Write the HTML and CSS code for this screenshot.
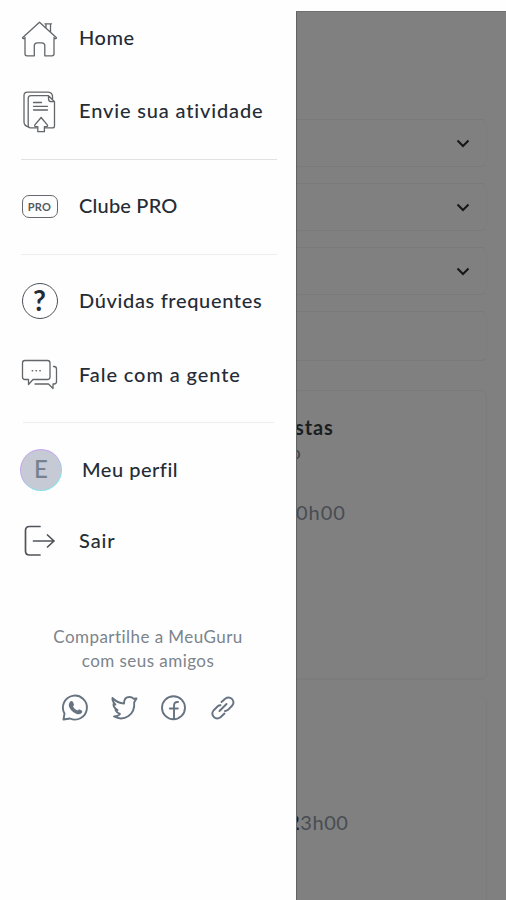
FILE: index.html
```html
<!DOCTYPE html>
<html lang="pt-BR">
<head>
<meta charset="utf-8">
<title>MeuGuru</title>
<link rel="stylesheet" href="styles.css">
</head>
<body>
<div class="app">
  <aside class="drawer">
    <nav class="menu">
      <a class="item home"><svg class="icon" viewBox="2.5 1.700 39 39"><path d="M7.500 21v16.500q0 2 2 2h7.300V29.500q0-3 3-3h4.500q3 0 3 3v10h7.200q2 0 2-2V21M5 21.500 22 6l17 15.500M5 21.500q.5 1.500 2.500.5M39 21.500q-.5 1.500-2.500.5M28.500 11.500V7.500h4.500v8.500M27.500 7.500h6.500"/></svg><span>Home</span></a>
      <a class="item send"><svg class="icon" viewBox="20 92 39 39"><path d="M37 127.800h-6.500q-2.300 0-2.300-2.300V98.500q0-2.800 2.800-2.800h17.500l6 6v24q0 2.200-2.200 2.200H44M48.500 95.700v3q0 3 3 3h3M28.200 127q-4.200-1.500-4.200-5V95.500q0-3.300 3.500-3.300h20.500q3.500 0 4.500 3.500v3M33.500 102.500h8M33.500 106.300h14M33.500 110h14"/><path class="up" d="M37.800 131.700v-5h-2.200q-1.700-.5-.5-2l6-7.200 6 7.200q1.200 1.500-.5 2h-2.200v5z"/></svg><span>Envie sua atividade</span></a>
      <hr>
      <a class="item club"><span class="icon"><span class="pro">PRO</span></span><span>Clube PRO</span></a>
      <hr class="light">
      <a class="item faq"><span class="icon"><span class="question">?</span></span><span>Dúvidas frequentes</span></a>
      <a class="item talk"><svg class="icon" viewBox="2.500 2.500 39 39"><path d="M7 8h23q2.500 0 2.500 2.500v14q0 2.500-2.500 2.500H15.500L11 32v-5H7.500Q5 27 5 24.500v-14Q5 8 7.500 8M36 14h.5q2.500 0 2.500 2.500V29q0 2.500-2.500 2.500h-1V36L31 31.500H17.500"/><path class="dots" d="M14.800 18.300h.3M18.600 18.300h.3M22.400 18.300h.3"/></svg><span>Fale com a gente</span></a>
      <hr class="light short">
      <a class="item profile"><span class="avatar">E</span><span>Meu perfil</span></a>
      <a class="item exit"><svg class="icon" viewBox="2.500 2.500 39 39"><path class="strong" d="M22.500 8H12q-4 0-4 4v20.500q0 4 4 4h10.500M16 22.500h20.500M30 16.500l6.500 6-6.500 6"/></svg><span>Sair</span></a>
    </nav>
    <section class="share">
      <p><span class="line-a">Compartilhe a MeuGuru</span><br><span class="line-b">com seus amigos</span></p>
      <div class="social">
        <svg viewBox="0 0 28 28"><path d="M2.500 25.500 3.500 19.500A12 12 0 1 1 9 24.500z"/><path class="fill" d="M8.500 8.500q2-2.500 3.500-.5l1 2.500q0 1-1 2 1.500 3 4.500 4 1-1.500 2.200-1l2.300 1.200q1 1-.8 2.800-2 1.500-5 .3-5-2-7-6.800-.8-2.700.3-4.500z"/></svg>
        <svg viewBox="0 0 28 28"><path d="M2.500 4q5 5.300 11.500 5.500 0-6.500 5.500-6.500 2.500 0 4 1.700l3-.2-2.300 3.800q.8 9-5.700 13.700-7 4.600-14.500.5 4 0 6-2.500-3-1-4.500-4h2Q3.200 13.500 3.500 10l2 .6Q2 7.500 2.500 4z"/></svg>
        <svg viewBox="0 0 28 28"><circle cx="14.500" cy="13.700" r="11.500"/><path d="M15 25V12q0-4.500 4-4M10.800 14.500h8"/></svg>
        <svg viewBox="0 0 28 28"><path d="M11.500 17l7-7M13.500 8l4-3.500q3.500-2.200 6.500.5 2.800 3.300.3 6.500l-4.300 4.300q-1.500 1.300-3 1.200M16.500 19.500l-4 3.800q-3.500 2.500-6.700-.3-2.800-3.300-.3-6.500l4.500-4.500q1-.9 2.500-.8"/></svg>
      </div>
    </section>
  </aside>
  <main class="page">
    <div class="field"><svg viewBox="0 0 14 9"><path d="M1.500 1.500 7 7l5.500-5.500"/></svg></div>
    <div class="field"><svg viewBox="0 0 14 9"><path d="M1.500 1.500 7 7l5.500-5.500"/></svg></div>
    <div class="field"><svg viewBox="0 0 14 9"><path d="M1.500 1.500 7 7l5.500-5.500"/></svg></div>
    <div class="field last"></div>
    <article class="card">
      <h2>stas</h2>
      <p class="sub">o</p>
      <p class="time">0h00</p>
    </article>
    <article class="card next">
      <p class="time"><b>2</b>3h00</p>
    </article>
  </main>
</div>
</body>
</html>
```
FILE: styles.css
```css
* { box-sizing: border-box; }
body { margin: 0; background: #fefefe; font-family: Lato, sans-serif; }
.app { display: flex; width: 506px; height: 900px; overflow: hidden; }
.drawer { width: 296px; flex: none; padding: 1px 20px 0 20px; }
.menu { display: flex; flex-direction: column; }
.item { display: flex; align-items: center; height: 73.500px; gap: 20px; font-size: 20px; font-weight: 500; color: #252c36; white-space: nowrap; letter-spacing: .5px; }
.item > span:last-child { padding-bottom: 2px; }
.send { letter-spacing: .85px; }
.club { letter-spacing: .2px; }
.faq { letter-spacing: .65px; }
.talk { letter-spacing: .9px; }
.exit { letter-spacing: .9px; }
.icon { width: 39px; height: 39px; flex: none; display: flex; align-items: center; justify-content: center; }
svg { fill: none; stroke: #626669; stroke-width: 1.300; stroke-linecap: round; stroke-linejoin: round; flex: none; overflow: visible; }
.up { fill: #fefefe; }
.strong { stroke: #50545a; stroke-width: 1.700; }
.dots { stroke-width: 1.600; }
hr { width: 256px; height: 1px; border: 0; margin: 10.500px 0 10px 1px; background: #e1e2e3; }
hr.light { background: #ededee; }
hr.short { width: 251px; margin-left: 3px; }
.pro { width: 36px; height: 23px; border: 1px solid #65696d; border-radius: 7px; display: flex; align-items: center; justify-content: center; font-size: 11px; font-weight: 700; letter-spacing: .3px; color: #555a60; }
.question { width: 36px; height: 36px; border: 1px solid #4c5156; border-radius: 50%; display: flex; align-items: center; justify-content: center; font-size: 28px; font-weight: 700; letter-spacing: 0; padding-bottom: 2px; }
.avatar { width: 42px; height: 42px; flex: none; border: 1.500px solid transparent; border-radius: 50%; background: linear-gradient(#c5cad4, #c5cad4) padding-box, linear-gradient(150deg, #c4a5ec 40%, #82e2ec 75%) border-box; display: flex; align-items: center; justify-content: center; color: #75818d; font-size: 24px; letter-spacing: 0; padding-bottom: 2px; }
.exit { height: 68px; }
.share { margin-top: 50px; display: flex; flex-direction: column; align-items: center; }
.share p { margin: 0; text-align: center; font-size: 17px; line-height: 24.500px; color: #7c848c; white-space: nowrap; letter-spacing: .45px; }
.social { display: flex; gap: 21px; margin: 20px 0 0 0; }
.social svg { width: 28px; height: 28px; stroke: #667381; stroke-width: 1.900; }
.social .fill { fill: #667381; stroke: none; }
.page { width: 210px; height: 889px; flex: none; margin-top: 11px; padding-top: 107px; background: #808080; border-left: 1px solid #626262; border-top: 1px solid #707070; overflow: hidden; }
.field { width: 190px; height: 48px; margin-bottom: 16px; border: 1px solid #7a7a7a; border-left: 0; border-right-color: #7d7d7d; border-radius: 0 6px 6px 0; display: flex; align-items: center; justify-content: flex-end; padding-right: 16px; }
.field svg { width: 14px; height: 9px; stroke: #171717; stroke-width: 2; stroke-linecap: butt; stroke-linejoin: miter; }
.field.last { height: 50px; margin-bottom: 29px; }
.card { width: 190px; height: 290px; border: 1px solid #7a7a7a; border-right-color: #7c7c7c; border-bottom: 2px solid #7c7c7c; border-left: 0; border-radius: 0 6px 6px 0; overflow: hidden; }
.card h2 { margin: 23px 0 0 -2px; font-size: 20px; line-height: 26px; color: #1b1d1f; letter-spacing: .9px; }
.card p { margin: 0; }
.card .sub { margin-left: -6px; font-size: 17px; line-height: 26px; color: #3d4145; }
.card .time { margin: 32px 0 0 -1px; font-size: 20px; line-height: 28px; letter-spacing: 1px; color: #484d53; }
.card.next { margin-top: 16px; height: 300px; border-top-color: #7f7f7f; }
.card.next .time { margin: 111px 0 0 -9px; letter-spacing: .6px; }
.card b { color: #1b1d1f; }
```
